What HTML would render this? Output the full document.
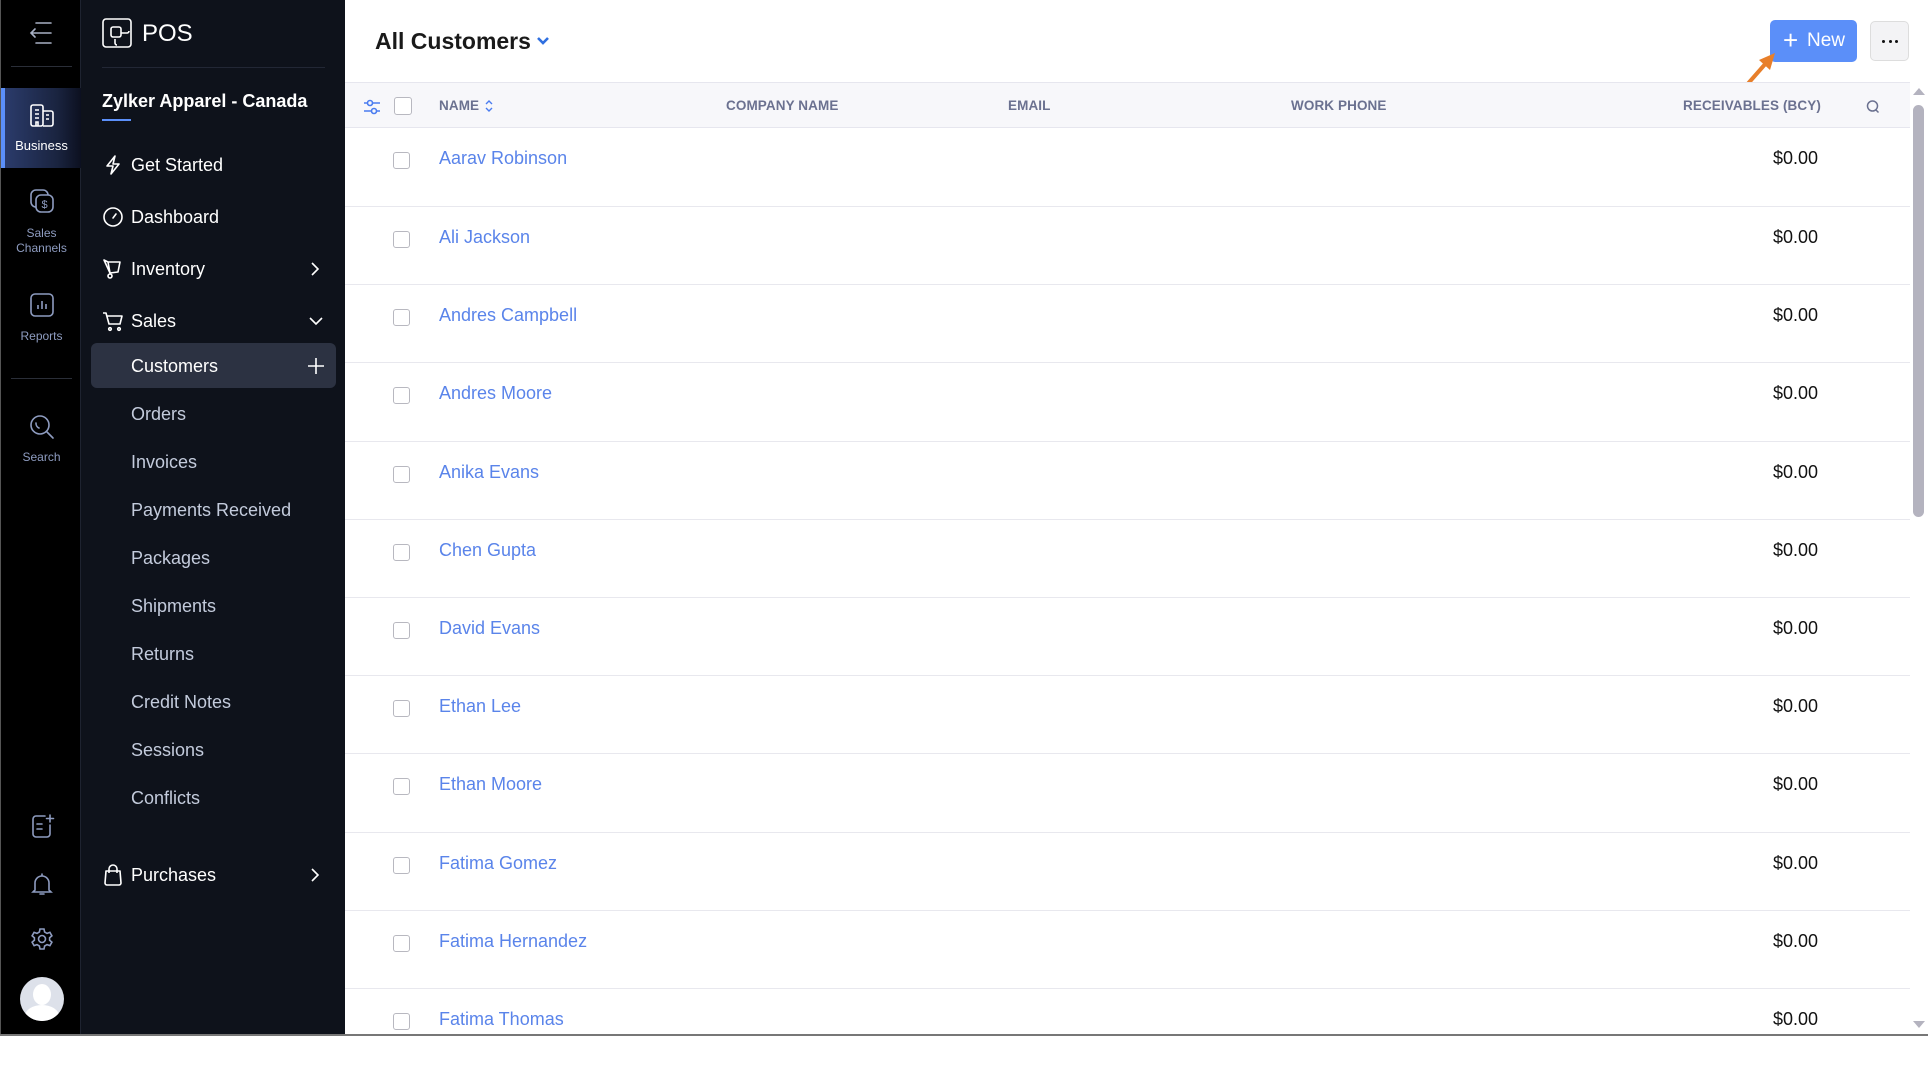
<!DOCTYPE html>
<html><head><meta charset="utf-8"><style>
*{margin:0;padding:0;box-sizing:border-box}
body{width:1928px;height:1036px;overflow:hidden;background:#fff;font-family:"Liberation Sans",sans-serif;position:relative}
.a{position:absolute}
#rail{left:0;top:0;width:81px;height:1036px;background:#000;border-left:1px solid #555;border-right:1px solid #1e2330}
#side{left:81px;top:0;width:264px;height:1036px;background:#0e121b}
.rl{position:absolute;left:0;width:81px;text-align:center;color:#8e9cc0;font-size:12px;line-height:15px}
.it{position:absolute;left:131px;color:#fff;font-size:18px;line-height:22px}
.sub{position:absolute;left:131px;color:#c3cbdc;font-size:18px;line-height:22px}
.ic{position:absolute}
.th{position:absolute;top:98px;font-size:13.5px;font-weight:bold;color:#6b7190;letter-spacing:0.1px}
.row{position:absolute;left:345px;width:1565px;height:78.2px;border-bottom:1px solid #e8e8ee}
.row .cb{position:absolute;left:48px;top:24px;width:17px;height:17px;border:1px solid #b8b8c0;border-radius:3px}
.row .n{position:absolute;left:94px;top:20px;font-size:18px;color:#5a84ea}
.row .v{position:absolute;right:92px;top:20px;font-size:18px;color:#111}
</style></head><body>
<div id="rail" class="a">
 <svg class="ic" style="left:27px;top:20px" width="26" height="26" viewBox="0 0 26 26" fill="none" stroke="#a8b0c4" stroke-width="1.6" stroke-linecap="round"><path d="M8 3H23M3 13H23M8 23H23M7 9L3 13L7 17"/></svg>
 <div class="a" style="left:10px;top:66px;width:61px;height:1px;background:#2a2e38"></div>
 <div class="a" style="left:0;top:88px;width:80px;height:80px;background:linear-gradient(90deg,#2c3d6e,#1a2440 70%,#0c1020)"></div>
 <div class="a" style="left:0;top:88px;width:4px;height:80px;background:#5b8ff9"></div>
 <svg class="ic" style="left:28px;top:102px" width="26" height="26" viewBox="0 0 26 26" fill="none" stroke="#fff" stroke-width="1.6"><rect x="2" y="3" width="12" height="21" rx="2"/><path d="M14 9H22a2 2 0 0 1 2 2V22a2 2 0 0 1-2 2H14M6 8h4M6 12h4M6 16h4M17 13h3M17 17h3M7 24v-4h2v4"/></svg>
 <div class="rl" style="top:138px;color:#fff;font-size:13px">Business</div>
 <svg class="ic" style="left:28px;top:188px" width="26" height="28" viewBox="0 0 26 28" fill="none" stroke="#8e9cc0" stroke-width="1.6"><rect x="2" y="2" width="17" height="17" rx="5"/><rect x="7" y="7" width="17" height="17" rx="5" fill="#000"/><text x="15.5" y="20" font-size="11" fill="#8e9cc0" stroke="none" text-anchor="middle" font-family="Liberation Sans">$</text></svg>
 <div class="rl" style="top:226px">Sales<br>Channels</div>
 <svg class="ic" style="left:28px;top:292px" width="26" height="26" viewBox="0 0 26 26" fill="none" stroke="#8e9cc0" stroke-width="1.6"><rect x="2" y="2" width="22" height="22" rx="4"/><path d="M9 17v-4M13 17V9M17 17v-5"/></svg>
 <div class="rl" style="top:329px">Reports</div>
 <div class="a" style="left:10px;top:378px;width:61px;height:1px;background:#2a2e38"></div>
 <svg class="ic" style="left:28px;top:414px" width="26" height="26" viewBox="0 0 26 26" fill="none" stroke="#8e9cc0" stroke-width="1.6" stroke-linecap="round"><circle cx="11" cy="11" r="9"/><path d="M18 18l6 6M7 9a5 5 0 0 0 3 5"/></svg>
 <div class="rl" style="top:450px">Search</div>
 <svg class="ic" style="left:30px;top:813px" width="24" height="26" viewBox="0 0 24 26" fill="none" stroke="#8e9cc0" stroke-width="1.6" stroke-linecap="round"><path d="M14 3H5a3 3 0 0 0-3 3v15a3 3 0 0 0 3 3h11a3 3 0 0 0 3-3V12M6 11h5M6 16h5M19 2v7M15.5 5.5h7"/></svg>
 <svg class="ic" style="left:29px;top:871px" width="24" height="26" viewBox="0 0 24 26" fill="none" stroke="#8e9cc0" stroke-width="1.6" stroke-linecap="round"><path d="M12 3v2M5 19V12a7 7 0 0 1 14 0v7l2 2H3zM10 23h4"/></svg>
 <svg class="ic" style="left:29px;top:927px" width="24" height="24" viewBox="0 0 24 24" fill="none" stroke="#8e9cc0" stroke-width="1.6"><circle cx="12" cy="12" r="3.5"/><path d="M10 2h4l.6 3 2.4 1.4 2.9-1 2 3.4-2.3 2v2.4l2.3 2-2 3.4-2.9-1L14.6 19l-.6 3h-4l-.6-3L7 17.6l-2.9 1-2-3.4 2.3-2V10.8l-2.3-2 2-3.4 2.9 1L9.4 5z"/></svg>
 <div class="a" style="left:19px;top:977px;width:44px;height:44px;border-radius:50%;background:#dde1ea;overflow:hidden"><div class="a" style="left:13px;top:7px;width:18px;height:21px;border-radius:50%;background:#fff"></div><div class="a" style="left:5px;top:28px;width:34px;height:22px;border-radius:50% 50% 0 0;background:#fff"></div></div>
</div>
<div id="side" class="a">
 <svg class="ic" style="left:21px;top:18px" width="30" height="30" viewBox="0 0 30 30" fill="none" stroke="#fff" stroke-width="1.6"><rect x="1" y="1" width="28" height="28" rx="3"/><rect x="9" y="9" width="10" height="10" rx="2"/><path d="M13 21v4a2 2 0 0 0 2 2h0M19 15h6a2 2 0 0 0 2-2"/></svg>
 <div class="a" style="left:61px;top:20px;color:#fff;font-size:24px">POS</div>
 <div class="a" style="left:21px;top:67px;width:223px;height:1px;background:#222735"></div>
 <div class="a" style="left:21px;top:91px;color:#fff;font-size:18px;font-weight:bold">Zylker Apparel - Canada</div>
 <div class="a" style="left:21px;top:119px;width:29px;height:2px;background:#5b8ff9"></div>
</div>
<svg class="ic" style="left:103px;top:155px" width="20" height="20" viewBox="0 0 20 20" fill="none" stroke="#fff" stroke-width="1.6" stroke-linejoin="round"><path d="M12 1L4 11h6l-2 8 8-10h-6z"/></svg>
<div class="it" style="top:154px">Get Started</div>
<svg class="ic" style="left:102px;top:206px" width="22" height="22" viewBox="0 0 22 22" fill="none" stroke="#fff" stroke-width="1.6" stroke-linecap="round"><circle cx="11" cy="11" r="9"/><path d="M11 12l3-4"/></svg>
<div class="it" style="top:206px">Dashboard</div>
<svg class="ic" style="left:102px;top:258px" width="22" height="22" viewBox="0 0 22 22" fill="none" stroke="#fff" stroke-width="1.6" stroke-linejoin="round"><path d="M2 2l4 2 12 0-2 10-8 1zM6 4l2 11"/><circle cx="8" cy="18" r="2"/></svg>
<div class="it" style="top:258px">Inventory</div>
<svg class="ic" style="left:308px;top:261px" width="14" height="16" viewBox="0 0 14 16" fill="none" stroke="#fff" stroke-width="1.6"><path d="M4 2l6 6-6 6"/></svg>
<svg class="ic" style="left:102px;top:310px" width="22" height="22" viewBox="0 0 22 22" fill="none" stroke="#fff" stroke-width="1.6" stroke-linejoin="round"><path d="M1 3h3l3 11h11l2-8H5.5"/><circle cx="8" cy="19" r="1.3"/><circle cx="17" cy="19" r="1.3"/></svg>
<div class="it" style="top:310px">Sales</div>
<svg class="ic" style="left:308px;top:314px" width="16" height="14" viewBox="0 0 16 14" fill="none" stroke="#fff" stroke-width="1.6"><path d="M2 4l6 6 6-6"/></svg>
<div class="a" style="left:91px;top:343px;width:245px;height:45px;background:#2c3242;border-radius:6px"></div>
<div class="it" style="top:355px">Customers</div>
<svg class="ic" style="left:307px;top:357px" width="18" height="18" viewBox="0 0 18 18" fill="none" stroke="#fff" stroke-width="1.6"><path d="M9 1v16M1 9h16"/></svg>
<div class="sub" style="top:403px">Orders</div>
<div class="sub" style="top:451px">Invoices</div>
<div class="sub" style="top:499px">Payments Received</div>
<div class="sub" style="top:547px">Packages</div>
<div class="sub" style="top:595px">Shipments</div>
<div class="sub" style="top:643px">Returns</div>
<div class="sub" style="top:691px">Credit Notes</div>
<div class="sub" style="top:739px">Sessions</div>
<div class="sub" style="top:787px">Conflicts</div>
<svg class="ic" style="left:103px;top:864px" width="20" height="22" viewBox="0 0 20 22" fill="none" stroke="#fff" stroke-width="1.6" stroke-linejoin="round"><path d="M3 7h14l1 12a2 2 0 0 1-2 2H4a2 2 0 0 1-2-2zM6 9V5a4 4 0 0 1 8 0v4"/></svg>
<div class="it" style="top:864px">Purchases</div>
<svg class="ic" style="left:308px;top:867px" width="14" height="16" viewBox="0 0 14 16" fill="none" stroke="#fff" stroke-width="1.6"><path d="M4 2l6 6-6 6"/></svg>

<div class="a" style="left:375px;top:28px;font-size:23px;font-weight:bold;color:#1a1a1a">All Customers</div>
<svg class="ic" style="left:536px;top:36px" width="14" height="10" viewBox="0 0 14 10" fill="none" stroke="#2f6fe0" stroke-width="2.6"><path d="M2 2l5 5 5-5"/></svg>
<div class="a" style="left:1770px;top:20px;width:87px;height:42px;background:#5b8ff9;border-radius:5px;color:#fff;font-size:19px;line-height:42px"><span style="position:absolute;left:13px;top:-1px;font-size:26px;font-weight:300">+</span><span style="position:absolute;left:37px">New</span></div>
<div class="a" style="left:1870px;top:21px;width:39px;height:40px;background:#f3f3f5;border:1px solid #ddd;border-radius:5px">
 <div class="a" style="left:11px;top:18px;width:3px;height:3px;border-radius:50%;background:#111"></div>
 <div class="a" style="left:17.5px;top:18px;width:3px;height:3px;border-radius:50%;background:#111"></div>
 <div class="a" style="left:24px;top:18px;width:3px;height:3px;border-radius:50%;background:#111"></div>
</div>
<svg class="ic" style="left:1738px;top:50px" width="44" height="42" viewBox="0 0 44 42"><path d="M7 37L29 12" stroke="#e87f2a" stroke-width="4" stroke-linecap="round"/><path d="M37 3L21 10l11 10z" fill="#e87f2a"/></svg>

<div class="a" style="left:345px;top:82px;width:1565px;height:46px;background:#f7f7fa;border-top:1px solid #e6e6ee;border-bottom:1px solid #e6e6ee"></div>
<svg class="ic" style="left:363px;top:99px" width="18" height="16" viewBox="0 0 18 16" fill="none" stroke="#4a7cf0" stroke-width="1.6"><path d="M1 4h16M1 12h16"/><circle cx="7" cy="4" r="2.5" fill="#f7f7fa"/><circle cx="11" cy="12" r="2.5" fill="#f7f7fa"/></svg>
<div class="a" style="left:394px;top:97px;width:18px;height:18px;border:1px solid #b8b8c0;border-radius:3px;background:#fff"></div>
<div class="th" style="left:439px">NAME</div>
<svg class="ic" style="left:485px;top:99px" width="8" height="14" viewBox="0 0 8 14" fill="none" stroke="#4a7cf0" stroke-width="1.4"><path d="M1 5l3-3 3 3M1 9l3 3 3-3"/></svg>
<div class="th" style="left:726px">COMPANY NAME</div>
<div class="th" style="left:1008px">EMAIL</div>
<div class="th" style="left:1291px">WORK PHONE</div>
<div class="th" style="left:1683px">RECEIVABLES (BCY)</div>
<svg class="ic" style="left:1866px;top:99px" width="14" height="16" viewBox="0 0 14 16" fill="none" stroke="#6b7190" stroke-width="1.5"><circle cx="6.5" cy="7" r="5"/><path d="M10 11l2.5 2.5"/></svg>

<div class="row" style="top:128px;height:79px"><div class="cb"></div><div class="n">Aarav Robinson</div><div class="v">$0.00</div></div>
<div class="row" style="top:207px"><div class="cb"></div><div class="n">Ali Jackson</div><div class="v">$0.00</div></div>
<div class="row" style="top:285.2px"><div class="cb"></div><div class="n">Andres Campbell</div><div class="v">$0.00</div></div>
<div class="row" style="top:363.4px"><div class="cb"></div><div class="n">Andres Moore</div><div class="v">$0.00</div></div>
<div class="row" style="top:441.6px"><div class="cb"></div><div class="n">Anika Evans</div><div class="v">$0.00</div></div>
<div class="row" style="top:519.8px"><div class="cb"></div><div class="n">Chen Gupta</div><div class="v">$0.00</div></div>
<div class="row" style="top:598px"><div class="cb"></div><div class="n">David Evans</div><div class="v">$0.00</div></div>
<div class="row" style="top:676.2px"><div class="cb"></div><div class="n">Ethan Lee</div><div class="v">$0.00</div></div>
<div class="row" style="top:754.4px"><div class="cb"></div><div class="n">Ethan Moore</div><div class="v">$0.00</div></div>
<div class="row" style="top:832.6px"><div class="cb"></div><div class="n">Fatima Gomez</div><div class="v">$0.00</div></div>
<div class="row" style="top:910.8px"><div class="cb"></div><div class="n">Fatima Hernandez</div><div class="v">$0.00</div></div>
<div class="row" style="top:989px;border:none"><div class="cb"></div><div class="n">Fatima Thomas</div><div class="v">$0.00</div></div>

<svg class="ic" style="left:1912px;top:86px" width="14" height="10" viewBox="0 0 14 10"><path d="M1 9L7 2l6 7z" fill="#b4b3bf"/></svg>
<div class="a" style="left:1913px;top:105px;width:11px;height:412px;background:#b4b3bf;border-radius:6px"></div>
<svg class="ic" style="left:1912px;top:1020px" width="14" height="10" viewBox="0 0 14 10"><path d="M1 1l6 7 6-7z" fill="#b4b3bf"/></svg>
<div class="a" style="left:0;top:1034px;width:1928px;height:2px;background:#777"></div>
</body></html>
